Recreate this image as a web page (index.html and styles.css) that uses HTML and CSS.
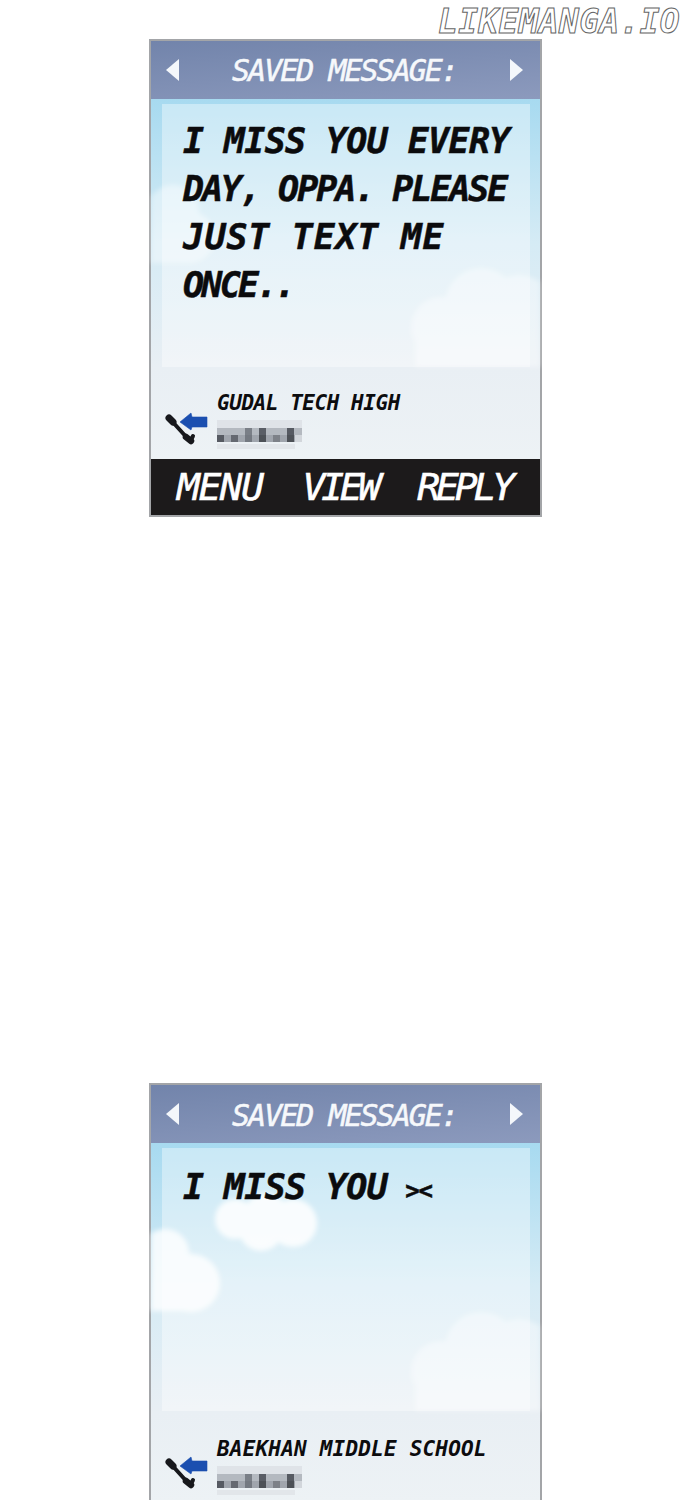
FILE: index.html

```html
<!DOCTYPE html>
<html lang="en">
<head>
    <meta charset="UTF-8">
    <meta name="viewport" content="width=device-width, initial-scale=1.0">
    <title>Saved Message</title>
    <link rel="stylesheet" href="styles.css">
</head>
<body>
    <svg class="defs" width="0" height="0">
        <defs>
            <symbol id="call" viewBox="0 0 44 34">
                <path d="M5 8 L24 29" fill="none" stroke="#17181c" stroke-width="4" stroke-linecap="round"/>
                <path d="M4 7 L8 11" fill="none" stroke="#17181c" stroke-width="7" stroke-linecap="round"/>
                <path d="M21 26 L26 30" fill="none" stroke="#17181c" stroke-width="6.5" stroke-linecap="round"/>
                <path d="M26 29 L28 25" fill="none" stroke="#17181c" stroke-width="4" stroke-linecap="round"/>
                <path d="M15 11 L26 2 L27 6 L42 6 L42 16 L27 16 L26 19 Z" fill="#1b4fb0" stroke="#1b4fb0" stroke-width="0.6" stroke-linejoin="round"/>
            </symbol>
            <symbol id="blur" viewBox="0 0 85 32">
                <rect x="0" y="0" width="85" height="8" fill="#dfe3e8"/>
                <rect x="0" y="8" width="85" height="7" fill="#b4b9c0"/>
                <rect x="28" y="8" width="7" height="7" fill="#7a7f87"/>
                <rect x="42" y="8" width="7" height="7" fill="#5a5e66"/>
                <rect x="70" y="8" width="7" height="7" fill="#565a62"/>
                <rect x="0" y="15" width="85" height="7" fill="#a0a5ad"/>
                <rect x="0" y="15" width="7" height="7" fill="#565a62"/>
                <rect x="14" y="15" width="7" height="7" fill="#656971"/>
                <rect x="28" y="15" width="7" height="7" fill="#747981"/>
                <rect x="42" y="15" width="7" height="7" fill="#4d5157"/>
                <rect x="56" y="15" width="7" height="7" fill="#7d8188"/>
                <rect x="70" y="15" width="7" height="7" fill="#4d5157"/>
                <rect x="78" y="15" width="7" height="7" fill="#d2d6db"/>
                <rect x="0" y="24" width="78" height="5" fill="#e2e6ea"/>
            </symbol>
            <symbol id="cloud-right" viewBox="0 0 389 360">
                <circle cx="290" cy="228" r="30"/>
                <circle cx="330" cy="205" r="36"/>
                <circle cx="368" cy="210" r="34"/>
                <rect x="264" y="225" width="125" height="43"/>
            </symbol>
        </defs>
    </svg>

    <div class="watermark">LIKEMANGA.IO</div>

    <div class="phone">
        <div class="top-bar">
            <span class="arrow arrow-left"></span>
            <h2>SAVED MESSAGE:</h2>
            <span class="arrow arrow-right"></span>
        </div>
        <div class="screen">
            <svg class="clouds" viewBox="0 0 389 360" width="389" height="360">
                <g fill="#fff" opacity="0.4">
                    <circle cx="22" cy="112" r="26"/>
                    <circle cx="38" cy="138" r="26"/>
                    <rect x="0" y="112" width="40" height="52"/>
                </g>
                <use href="#cloud-right" fill="#fff" opacity="0.4"/>
            </svg>
            <div class="panel">
                <p class="message">
                    <span class="line-1">I MISS YOU EVERY</span>
                    <span class="line-2">DAY, OPPA. PLEASE</span>
                    <span class="line-3">JUST TEXT ME</span>
                    <span class="line-4">ONCE..</span>
                </p>
            </div>
            <div class="caller">
                <svg class="call-icon"><use href="#call"/></svg>
                <div class="caller-info">
                    <div class="caller-name">GUDAL TECH HIGH</div>
                    <svg class="caller-number"><use href="#blur"/></svg>
                </div>
            </div>
        </div>
        <div class="soft-keys">
            <span>MENU</span>
            <span>VIEW</span>
            <span>REPLY</span>
        </div>
    </div>

    <div class="phone phone-second">
        <div class="top-bar">
            <span class="arrow arrow-left"></span>
            <h2>SAVED MESSAGE:</h2>
            <span class="arrow arrow-right"></span>
        </div>
        <div class="screen">
            <svg class="clouds" viewBox="0 0 389 360" width="389" height="360">
                <g fill="#fff" opacity="0.8">
                    <circle cx="14" cy="110" r="24"/>
                    <circle cx="40" cy="140" r="29"/>
                    <rect x="0" y="110" width="40" height="58"/>
                </g>
                <g fill="#fff" opacity="0.85">
                    <circle cx="84" cy="76" r="20"/>
                    <circle cx="115" cy="72" r="22"/>
                    <circle cx="142" cy="80" r="24"/>
                    <circle cx="110" cy="86" r="22"/>
                </g>
                <use href="#cloud-right" fill="#fff" opacity="0.4"/>
            </svg>
            <div class="panel">
                <p class="message">
                    <span class="line-1">I MISS YOU<span class="smiley">&gt;&lt;</span></span>
                </p>
            </div>
            <div class="caller">
                <svg class="call-icon"><use href="#call"/></svg>
                <div class="caller-info">
                    <div class="caller-name caller-name-long">BAEKHAN MIDDLE SCHOOL</div>
                    <svg class="caller-number"><use href="#blur"/></svg>
                </div>
            </div>
        </div>
    </div>
</body>
</html>
```

FILE: styles.css

```css
html, body {
    margin: 0;
    height: 1500px;
    overflow: hidden;
    background: white;
}
body {
    position: relative;
    padding-top: 39px;
    box-sizing: border-box;
    font-family: 'DejaVu Sans Mono', 'Liberation Mono', monospace;
    font-style: italic;
}
.defs {
    position: absolute;
}
.watermark {
    position: absolute;
    top: 2px;
    left: 438px;
    font-size: 33px;
    font-weight: 700;
    line-height: 40px;
    letter-spacing: 0.3px;
    color: white;
    -webkit-text-stroke: 1px #666;
}
.phone {
    width: 389px;
    margin-left: 149px;
    border: 2px solid #a3a5a8;
    background: white;
}
.phone-second {
    margin-top: 566px;
}
.phone-second h2 {
    padding-top: 3px;
}
.phone-second .panel {
    padding-top: 15px;
}
.phone-second .caller {
    padding-top: 25px;
}
.phone-second .call-icon {
    margin-top: 19px;
}
.top-bar {
    height: 58px;
    display: flex;
    align-items: center;
    justify-content: space-between;
    padding: 0 17px 0 15px;
    box-sizing: border-box;
    background: linear-gradient(175deg, #7284ab, #8c9abd);
}
h2 {
    margin: 0;
    color: #f6f8fb;
    font-size: 30px;
    font-weight: 400;
    letter-spacing: -2px;
    white-space: nowrap;
    -webkit-text-stroke: 0.5px #f6f8fb;
}
.arrow {
    width: 0;
    height: 0;
    border-top: 11px solid transparent;
    border-bottom: 11px solid transparent;
}
.arrow-left {
    border-right: 13px solid #f4f7fb;
}
.arrow-right {
    border-left: 13px solid #f4f7fb;
}
.screen {
    position: relative;
    height: 360px;
    padding-top: 5px;
    box-sizing: border-box;
    background: linear-gradient(#a7daf0, #d5ebf5 40%, #e9eff4 75%, #edf2f5);
}
.clouds {
    position: absolute;
    top: 0;
    left: 0;
    filter: blur(2.5px);
}
.panel {
    position: relative;
    height: 263px;
    margin: 0 10px 0 11px;
    padding: 13px 0 0 21px;
    box-sizing: border-box;
    background: rgba(255, 255, 255, 0.38);
}
.message {
    margin: 0;
    font-size: 35px;
    font-weight: 700;
    line-height: 48px;
    color: #0b0b0d;
    white-space: nowrap;
    -webkit-text-stroke: 0.5px #0b0b0d;
}
.message span {
    display: block;
}
.message .smiley {
    display: inline;
    margin-left: 18px;
    font-size: 24px;
    letter-spacing: -1.2px;
}
.line-1 {
    letter-spacing: -0.65px;
}
.line-2 {
    letter-spacing: -2.05px;
}
.line-3 {
    letter-spacing: 0.7px;
}
.line-4 {
    letter-spacing: -2.7px;
}
.caller {
    position: relative;
    display: flex;
    align-items: flex-start;
    height: 92px;
    padding: 23px 0 0 14px;
    box-sizing: border-box;
}
.call-icon {
    width: 44px;
    height: 34px;
    margin-top: 21px;
    flex: none;
}
.caller-info {
    margin-left: 8px;
}
.caller-name {
    font-size: 21px;
    font-weight: 700;
    line-height: 26px;
    letter-spacing: -0.45px;
    color: #0c0c0e;
    white-space: nowrap;
}
.caller-name-long {
    letter-spacing: 0.2px;
}
.caller-number {
    display: block;
    width: 85px;
    height: 32px;
    margin-top: 4px;
    filter: blur(0.6px);
}
.soft-keys {
    height: 56px;
    display: flex;
    gap: 40px;
    align-items: center;
    padding: 0 0 0 26px;
    box-sizing: border-box;
    background: #1c1a1b;
    color: white;
    font-size: 38px;
    font-weight: 400;
    -webkit-text-stroke: 0.6px white;
}
.soft-keys span:nth-child(1) {
    letter-spacing: -1.5px;
}
.soft-keys span:nth-child(2) {
    letter-spacing: -4.2px;
}
.soft-keys span:nth-child(3) {
    letter-spacing: -4.1px;
}
```
